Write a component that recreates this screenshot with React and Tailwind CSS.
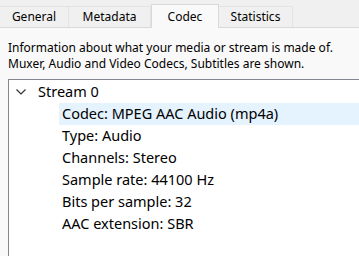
import React from "react";

const font = { fontFamily: '"Segoe UI", "Noto Sans", sans-serif' };

function Tab({ label, selected, className }) {
  return (
    <div
      className={
        "flex items-center justify-center border-t border-l border-r text-[12px] text-black " +
        (selected
          ? "h-[24px] bg-[#f9f9f9] border-[#d9d9d9] -mb-px relative"
          : "h-[21px] bg-[#f0f0f0] border-[#e3e3e3]") +
        " " +
        className
      }
    >
      {label}
    </div>
  );
}

function Row({ children, highlight }) {
  return (
    <div
      className={
        "h-[22px] flex items-center pl-[3px] ml-[50px] text-[14.5px] text-black whitespace-nowrap " +
        (highlight ? "bg-[#e5f3ff]" : "")
      }
    >
      {children}
    </div>
  );
}

export default function App() {
  const rows = [
    "Type: Audio",
    "Channels: Stereo",
    "Sample rate: 44100 Hz",
    "Bits per sample: 32",
    "AAC extension: SBR",
  ];
  return (
    <div
      className="w-[359px] h-[256px] overflow-hidden bg-[#f9f9f9] flex flex-col"
      style={font}
    >
      <div className="h-[28px] bg-[#f0f0f0] border-b border-[#d9d9d9] flex items-end shrink-0">
        <Tab label="General" className="w-[69px] border-l-0" />
        <Tab label="Metadata" className="w-[82px] border-l-0" />
        <Tab label="Codec" selected className="w-[68px]" />
        <Tab label="Statistics" className="w-[74px] border-l-0" />
      </div>
      <div className="pl-[8px] pt-[12px] text-[12px] leading-[16px] text-black whitespace-nowrap">
        <div>Information about what your media or stream is made of.</div>
        <div>Muxer, Audio and Video Codecs, Subtitles are shown.</div>
      </div>
      <div className="ml-[8px] mt-[7px] flex-1 bg-white border-l border-t border-[#828790] pt-[1px]">
        <div className="h-[22px] flex items-center text-[14.5px] text-black whitespace-nowrap">
          <svg
            width="10"
            height="6"
            viewBox="0 0 10 6"
            className="ml-[7px] mr-[12px]"
            fill="none"
          >
            <path d="M0.5 0.5 L5 5 L9.5 0.5" stroke="#333" strokeWidth="1.2" />
          </svg>
          Stream 0
        </div>
        <Row highlight>Codec: MPEG AAC Audio (mp4a)</Row>
        {rows.map((r) => (
          <Row key={r}>{r}</Row>
        ))}
      </div>
    </div>
  );
}
